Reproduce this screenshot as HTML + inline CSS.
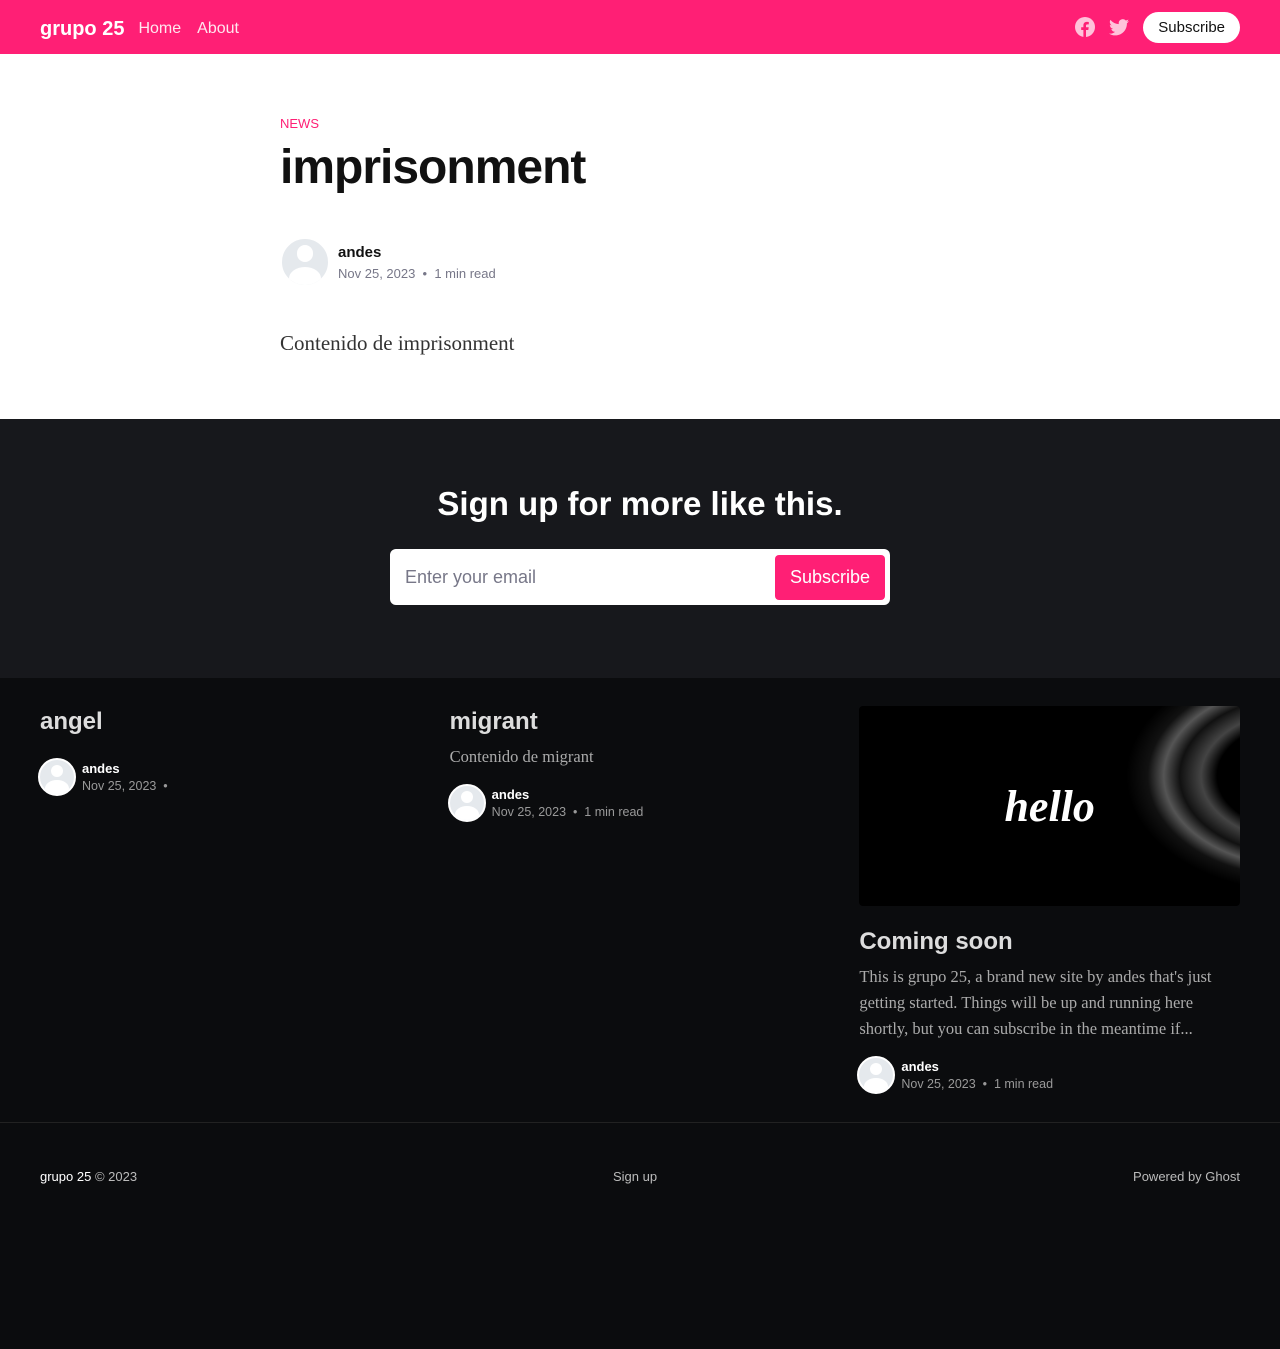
<!DOCTYPE html>
<html><head><meta charset="utf-8"><style>
*{margin:0;padding:0;box-sizing:border-box}
body{width:1280px;height:1349px;background:#0b0c0e;font-family:"Liberation Sans",sans-serif;overflow:hidden}
.top{background:#fff}
header{height:54px;background:#ff1f75;display:flex;align-items:center;padding:4px 40px 0;color:#fff}
.logo{font-weight:bold;font-size:20px;margin-right:14px}
header nav a{font-size:16px;margin-right:16px;color:#ffe6ee}
.right{margin-left:auto;display:flex;align-items:center;gap:14px;margin-top:-4px}
.sub{background:#fff;color:#111;border-radius:16px;padding:7px 15px;font-size:15px}
.art{padding:62px 280px 0;height:365px}
.tag{color:#ff1f75;font-size:13px}
h1{font-size:48px;color:#111;letter-spacing:-1px;margin-top:9px}
.av{border-radius:50%;background:#e5e9ed;position:relative;overflow:hidden;border:2px solid #fff}
.av:before{content:"";position:absolute;width:36%;height:36%;left:32%;top:14%;border-radius:50%;background:#fff}
.av:after{content:"";position:absolute;width:70%;height:50%;left:15%;top:60%;border-radius:50%;background:#fff}
.byline{display:flex;align-items:center;gap:8px;margin-top:42px}
.nm{font-size:15px;font-weight:bold;color:#111}
.dt{font-size:13px;color:#778}
.content{font-family:"Liberation Serif",serif;font-size:21px;color:#333;margin-top:44px}
.signup{background:#17181c;height:259px;text-align:center;padding-top:66px}
.signup h2{color:#fff;font-size:33px}
.form{width:500px;height:56px;margin:26px auto 0;background:#fff;border-radius:6px;display:flex;align-items:center;justify-content:space-between;padding:0 5px 0 15px}
.form span{color:#778;font-size:18px}
.form b{background:#ff1f75;color:#fff;font-weight:normal;font-size:18px;padding:12px 15px;border-radius:4px}
.cards{display:flex;padding:28px 40px 0;height:445px;border-bottom:1px solid #222}
.card{width:381px;margin-right:29px}
.card:last-child{margin:0}
.card h3{color:#ddd;font-size:24px;margin-top:2px}
.card p{font-family:"Liberation Serif",serif;color:#aaa;font-size:16.5px;line-height:26px;margin-top:8px}
.cb{display:flex;align-items:center;gap:6px;margin-top:14px;margin-left:-2px}
.cb .n{color:#fff;font-size:13px;font-weight:bold}
.cb .d{color:#999;font-size:12.5px;margin-top:3px}
.img{height:200px;border-radius:4px;background:radial-gradient(ellipse 70% 90% at 115% 35%,#000 30%,#444 36%,#111 44%,#555 50%,#111 56%,#000 64%),#000;color:#fff;display:flex;align-items:center;justify-content:center;font:italic bold 44px "Liberation Serif",serif}
footer{display:flex;justify-content:space-between;padding:46px 40px;font-size:13px;color:#bbb}
</style></head><body>
<div class="top">
<header><span class="logo">grupo 25</span><nav><a>Home</a><a>About</a></nav>
<div class="right">
<svg width="20" height="20" viewBox="0 0 20 20"><circle cx="10" cy="10" r="10" fill="#ffc2da"/><path d="M11 20v-7h2.3l.4-2.7H11V8.7c0-.8.3-1.3 1.4-1.3h1.4V5c-.3 0-1.1-.1-2-.1-2 0-3.4 1.2-3.4 3.4v2H6.2V13h2.2v7z" fill="#ff1f75"/></svg>
<svg width="20" height="17" viewBox="0 0 24 20"><path d="M24 2.4a10 10 0 0 1-2.8.8A5 5 0 0 0 23.3.4a10 10 0 0 1-3.1 1.2A4.9 4.9 0 0 0 11.8 6 14 14 0 0 1 1.7.9a4.9 4.9 0 0 0 1.5 6.6A4.9 4.9 0 0 1 1 6.9a4.9 4.9 0 0 0 3.900 4.8 4.9 4.9 0 0 1-2.2.1 4.9 4.9 0 0 0 4.6 3.4A9.9 9.9 0 0 1 0 17.3 14 14 0 0 0 7.5 19.5c9.1 0 14-7.5 14-14v-.6A10 10 0 0 0 24 2.4z" fill="#ffc2da"/></svg>
<span class="sub">Subscribe</span></div></header>
<div class="art"><div class="tag">NEWS</div><h1>imprisonment</h1>
<div class="byline"><div class="av" style="width:50px;height:50px"></div><div><div class="nm">andes</div><div class="dt" style="margin-top:5px">Nov 25, 2023 &nbsp;•&nbsp; 1 min read</div></div></div>
<div class="content">Contenido de imprisonment</div></div></div>
<div class="signup"><h2>Sign up for more like this.</h2><div class="form"><span>Enter your email</span><b>Subscribe</b></div></div>
<div class="cards">
<div class="card"><h3>angel</h3><div class="cb" style="margin-top:22px"><div class="av" style="width:38px;height:38px"></div><div><div class="n">andes</div><div class="d">Nov 25, 2023 &nbsp;•</div></div></div></div>
<div class="card"><h3>migrant</h3><p>Contenido de migrant</p><div class="cb"><div class="av" style="width:38px;height:38px"></div><div><div class="n">andes</div><div class="d">Nov 25, 2023 &nbsp;•&nbsp; 1 min read</div></div></div></div>
<div class="card"><div class="img">hello</div><h3 style="margin-top:22px">Coming soon</h3><p>This is grupo 25, a brand new site by andes that's just getting started. Things will be up and running here shortly, but you can subscribe in the meantime if...</p><div class="cb"><div class="av" style="width:38px;height:38px"></div><div><div class="n">andes</div><div class="d">Nov 25, 2023 &nbsp;•&nbsp; 1 min read</div></div></div></div>
</div>
<footer><span><span style="color:#fff">grupo 25</span> © 2023</span><span>Sign up</span><span>Powered by Ghost</span></footer>
</body></html>
